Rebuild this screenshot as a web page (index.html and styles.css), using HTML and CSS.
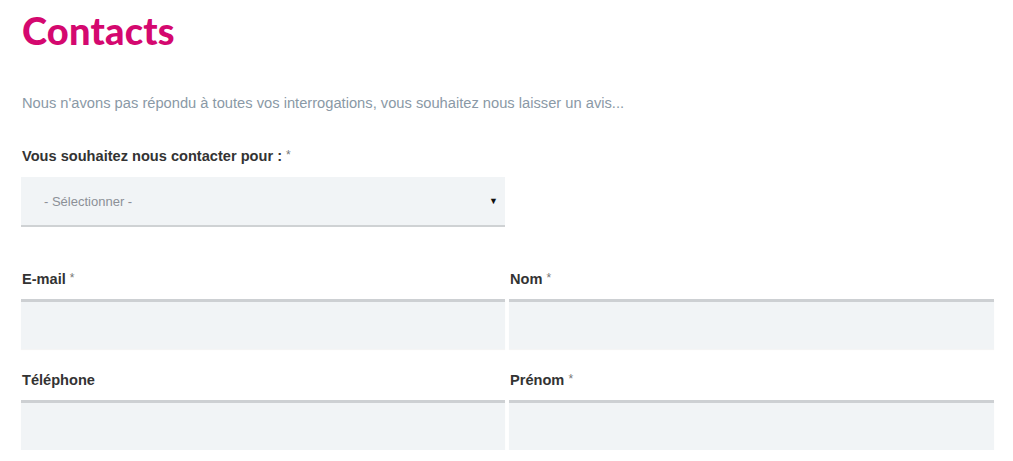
FILE: index.html
```html
<!DOCTYPE html>
<html lang="fr">
<head>
<meta charset="utf-8">
<title>Contacts</title>
<link rel="stylesheet" href="styles.css">
</head>
<body>
<main class="page">
  <h1 class="title">Contacts</h1>
  <p class="intro">Nous n'avons pas répondu à toutes vos interrogations, vous souhaitez nous laisser un avis...</p>
  <form class="form">
    <div class="field field-select">
      <label class="label">Vous souhaitez nous contacter pour : <span class="req">*</span></label>
      <div class="select">
        <span class="select-text">- Sélectionner -</span>
        <span class="arrow">▼</span>
      </div>
    </div>
    <div class="grid">
      <div class="field">
        <label class="label">E-mail <span class="req">*</span></label>
        <div class="input"></div>
      </div>
      <div class="field">
        <label class="label">Nom <span class="req">*</span></label>
        <div class="input"></div>
      </div>
      <div class="field">
        <label class="label">Téléphone</label>
        <div class="input"></div>
      </div>
      <div class="field">
        <label class="label">Prénom <span class="req">*</span></label>
        <div class="input"></div>
      </div>
    </div>
  </form>
</main>
</body>
</html>
```

FILE: styles.css
```css
html, body {
  margin: 0;
  padding: 0;
  background: #ffffff;
}
body {
  font-family: "Liberation Sans", Arial, sans-serif;
  color: #333;
}
.page {
  padding: 8px 19px 0 21px;
}
.title {
  margin: 0 0 0 1px;
  font-family: "Lato", "Open Sans", sans-serif;
  font-weight: 900;
  font-size: 38px;
  line-height: 44px;
  color: #d4086f;
  letter-spacing: 0.2px;
}
.intro {
  margin: 40px 0 0 1px;
  font-size: 14.7px;
  line-height: 22px;
  color: #8a99a6;
}
.form {
  margin-top: 33px;
}
.label {
  display: block;
  font-size: 14.6px;
  font-weight: bold;
  color: #333;
  line-height: 18px;
  margin-left: 1px;
}
.req {
  font-weight: normal;
  color: #777;
  font-size: 12px;
  line-height: 0;
  vertical-align: 2px;
}
.field-select {
  width: 484px;
}
.field-select .label {
  margin-bottom: 12px;
}
.select {
  height: 48px;
  background: #f1f4f6;
  border-bottom: 2px solid #cfd2d4;
  display: flex;
  align-items: center;
  justify-content: space-between;
  padding: 0 7px 0 23px;
}
.select-text {
  font-size: 13px;
  color: #8c9096;
}
.arrow {
  font-size: 9px;
  color: #111;
}
.grid {
  display: grid;
  grid-template-columns: 484px 485px;
  column-gap: 4px;
  row-gap: 22px;
  margin-top: 43px;
}
.grid .label {
  margin-bottom: 11px;
}
.input {
  height: 47px;
  background: #f1f4f6;
  border-top: 3px solid #cdd0d3;
  box-shadow: 0 1px 1px rgba(0,0,0,0.04);
}
```
